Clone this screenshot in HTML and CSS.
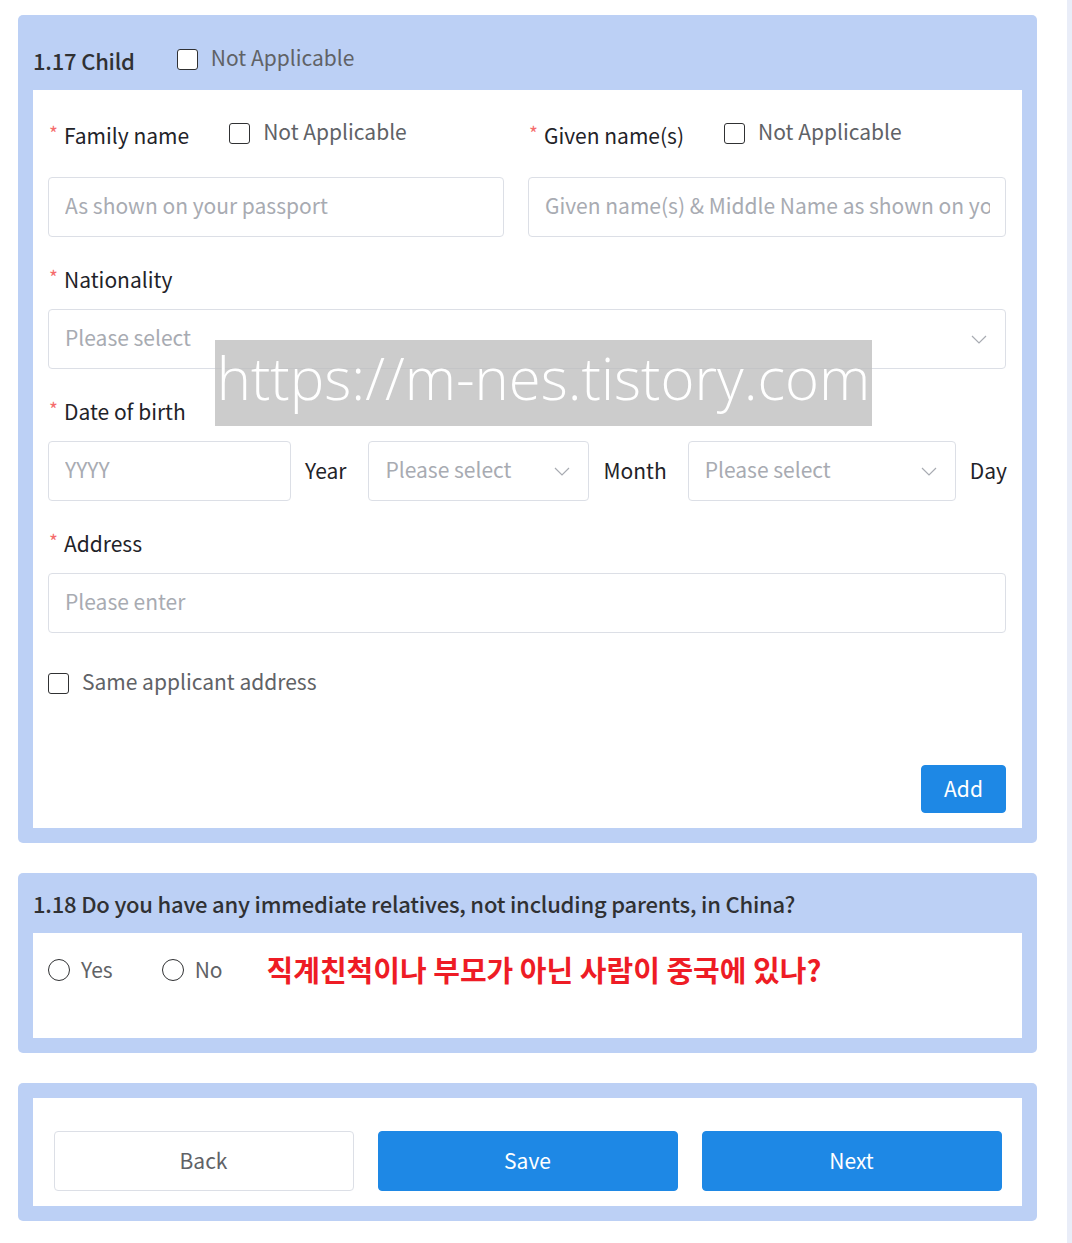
FILE: index.html
```html
<!DOCTYPE html>
<html lang="en">
<head>
<meta charset="utf-8">
<title>Child</title>
<link rel="stylesheet" href="styles.css">
</head>
<body>
<div class="page">
  <main class="main">
    <section class="card">
      <div class="card-head head-tall">
        <span class="card-title">1.17 Child</span>
        <span class="check head-check"><span class="box"></span><span class="check-text">Not Applicable</span></span>
      </div>
      <div class="card-body body-child">
        <div class="name-grid">
          <div class="field">
            <div class="label-row first-row">
              <span class="label"><span class="req">*</span>Family name</span>
              <span class="check"><span class="box"></span><span class="check-text">Not Applicable</span></span>
            </div>
            <input class="input" type="text" placeholder="As shown on your passport">
          </div>
          <div class="field">
            <div class="label-row first-row">
              <span class="label"><span class="req">*</span>Given name(s)</span>
              <span class="check"><span class="box"></span><span class="check-text">Not Applicable</span></span>
            </div>
            <input class="input" type="text" placeholder="Given name(s) &amp; Middle Name as shown on your passport">
          </div>
        </div>

        <div class="field gap-top">
          <div class="label-row"><span class="label"><span class="req">*</span>Nationality</span></div>
          <div class="select"><span class="ph">Please select</span>
            <svg class="chev" width="16" height="9" viewBox="0 0 16 9"><path d="M1 1 L8 8 L15 1" fill="none" stroke="#a8abb2" stroke-width="1.2"/></svg>
          </div>
        </div>

        <div class="field gap-top">
          <div class="label-row"><span class="label"><span class="req">*</span>Date of birth</span></div>
          <div class="date-row">
            <input class="input w-year" type="text" placeholder="YYYY">
            <span class="unit">Year</span>
            <div class="select w-month"><span class="ph">Please select</span>
              <svg class="chev" width="16" height="9" viewBox="0 0 16 9"><path d="M1 1 L8 8 L15 1" fill="none" stroke="#a8abb2" stroke-width="1.2"/></svg>
            </div>
            <span class="unit">Month</span>
            <div class="select w-day"><span class="ph">Please select</span>
              <svg class="chev" width="16" height="9" viewBox="0 0 16 9"><path d="M1 1 L8 8 L15 1" fill="none" stroke="#a8abb2" stroke-width="1.2"/></svg>
            </div>
            <span class="unit">Day</span>
          </div>
        </div>

        <div class="field gap-top">
          <div class="label-row"><span class="label"><span class="req">*</span>Address</span></div>
          <input class="input" type="text" placeholder="Please enter">
        </div>

        <div class="same-row">
          <span class="check"><span class="box"></span><span class="check-text">Same applicant address</span></span>
        </div>

        <div class="add-row"><button class="btn btn-primary btn-add" type="button">Add</button></div>
      </div>
    </section>

    <section class="card">
      <div class="card-head head-short">
        <span class="card-title">1.18 Do you have any immediate relatives, not including parents, in China?</span>
      </div>
      <div class="card-body body-rel">
        <span class="radio"><span class="circle"></span><span class="radio-text">Yes</span></span>
        <span class="radio"><span class="circle"></span><span class="radio-text">No</span></span>
        <span class="note">직계친척이나 부모가 아닌 사람이 중국에 있나?</span>
      </div>
    </section>

    <section class="card card-actions">
      <div class="card-body body-actions">
        <button class="btn btn-plain" type="button">Back</button>
        <button class="btn btn-primary" type="button">Save</button>
        <button class="btn btn-primary" type="button">Next</button>
      </div>
    </section>
  </main>
  <div class="strip"></div>
  <div class="watermark">https://m-nes.tistory.com</div>
</div>
</body>
</html>
```

FILE: styles.css
```css
* { box-sizing: border-box; }

body {
  margin: 0;
  background: #ffffff;
  font-family: "Noto Sans CJK KR", "Noto Sans", sans-serif;
  color: #1f2329;
}

.page {
  position: relative;
  display: flex;
  min-height: 1243px;
}

.main {
  width: 1067px;
  padding: 15px 30px 0 18px;
  display: flex;
  flex-direction: column;
  gap: 30px;
}

.strip {
  width: 5px;
  background: #e9edf8;
}

.card {
  background: #bcd0f5;
  border-radius: 5px;
  padding: 0 15px 15px;
}

.card-actions { padding-top: 15px; }

.card-head {
  display: flex;
  align-items: center;
}

.head-tall { height: 75px; padding-top: 16px; }
.head-short { height: 60px; padding-top: 2px; }

.card-title {
  font-size: 22px;
  font-weight: 500;
  color: #303133;
  line-height: 32px;
  letter-spacing: -0.2px;
  padding-bottom: 2px;
}

.card-body { background: #ffffff; }

.body-child { padding: 26px 16px 15px 15px; }

.name-grid {
  display: grid;
  grid-template-columns: 456px 1fr;
  column-gap: 24px;
}

.field { display: flex; flex-direction: column; }
.gap-top { margin-top: 23px; }

.label-row {
  display: flex;
  align-items: center;
  height: 40px;
  margin-bottom: 9px;
}
.first-row { margin-bottom: 21px; }

.label {
  font-size: 21px;
  line-height: 30px;
  color: #1f2329;
  padding-bottom: 2px;
}

.req {
  display: inline-block;
  color: #f56c6c;
  font-size: 19px;
  line-height: 19px;
  width: 15px;
  margin-left: 1px;
  vertical-align: 3px;
}

.check {
  display: inline-flex;
  align-items: center;
}

.label-row .check { margin-left: 40px; padding-bottom: 6px; }
.head-check { margin-left: 42px; padding-bottom: 3px; }

.box {
  width: 21px;
  height: 21px;
  border: 1.5px solid #303133;
  border-radius: 3px;
  background: #fff;
  flex: none;
}

.check-text {
  font-size: 21px;
  line-height: 30px;
  color: #606266;
  margin-left: 13px;
  padding-bottom: 5px;
}

.input {
  display: block;
  width: 100%;
  height: 60px;
  border: 1px solid #dcdfe6;
  border-radius: 4px;
  padding: 0 15px 5px 16px;
  font-family: inherit;
  font-size: 21px;
  color: #303133;
  background: #fff;
  outline: none;
}
.input::placeholder { color: #a8abb2; }

.select {
  position: relative;
  display: flex;
  align-items: center;
  justify-content: space-between;
  height: 60px;
  border: 1px solid #dcdfe6;
  border-radius: 4px;
  padding: 0 18px 0 16px;
  background: #fff;
}

.ph {
  font-size: 21px;
  line-height: 30px;
  color: #a8abb2;
  padding-bottom: 5px;
}

.chev { flex: none; }

.date-row {
  display: flex;
  align-items: center;
}

.w-year { width: 243px; flex: none; }
.w-month { width: 221px; flex: none; }
.w-day { width: 268px; flex: none; }

.unit {
  font-size: 21px;
  line-height: 30px;
  color: #1f2329;
  margin-left: 14px;
  padding-bottom: 2px;
}
.unit + .select { margin-left: 22px; }
.unit + .w-day { margin-left: 21px; }

.same-row {
  display: flex;
  align-items: center;
  height: 40px;
  margin-top: 30px;
}

.add-row {
  display: flex;
  justify-content: flex-end;
  margin-top: 62px;
}

.btn {
  font-family: inherit;
  font-size: 21px;
  border-radius: 4px;
  cursor: pointer;
  height: 60px;
  width: 300px;
  padding: 0 0 3px;
}

.btn-primary {
  background: #1e88e5;
  border: 1px solid #1e88e5;
  color: #ffffff;
}

.btn-plain {
  background: #ffffff;
  border: 1px solid #dcdfe6;
  color: #606266;
}

.btn-add {
  width: 85px;
  height: 48px;
}

.body-rel {
  display: flex;
  align-items: center;
  height: 105px;
  padding: 0 15px 31px;
}

.radio {
  display: inline-flex;
  align-items: center;
}

.circle {
  width: 22px;
  height: 22px;
  border: 1.5px solid #303133;
  border-radius: 50%;
  flex: none;
}

.radio-text {
  font-size: 21px;
  line-height: 30px;
  color: #606266;
  margin-left: 11px;
  padding-bottom: 3px;
}

.radio + .radio { margin-left: 49px; }

.note {
  margin-left: 44px;
  font-size: 29px;
  font-weight: 700;
  color: #ee1c25;
  line-height: 36px;
  padding-bottom: 3px;
}

.body-actions {
  display: flex;
  justify-content: center;
  gap: 24px;
  padding: 33px 0 15px;
}

.watermark {
  position: absolute;
  left: 215px;
  top: 340px;
  width: 657px;
  height: 86px;
  background: rgba(190, 190, 190, 0.78);
  color: #ffffff;
  font-family: "Open Sans", "Noto Sans", sans-serif;
  font-weight: 300;
  font-size: 58px;
  line-height: 76px;
  text-align: center;
  white-space: nowrap;
}
```
